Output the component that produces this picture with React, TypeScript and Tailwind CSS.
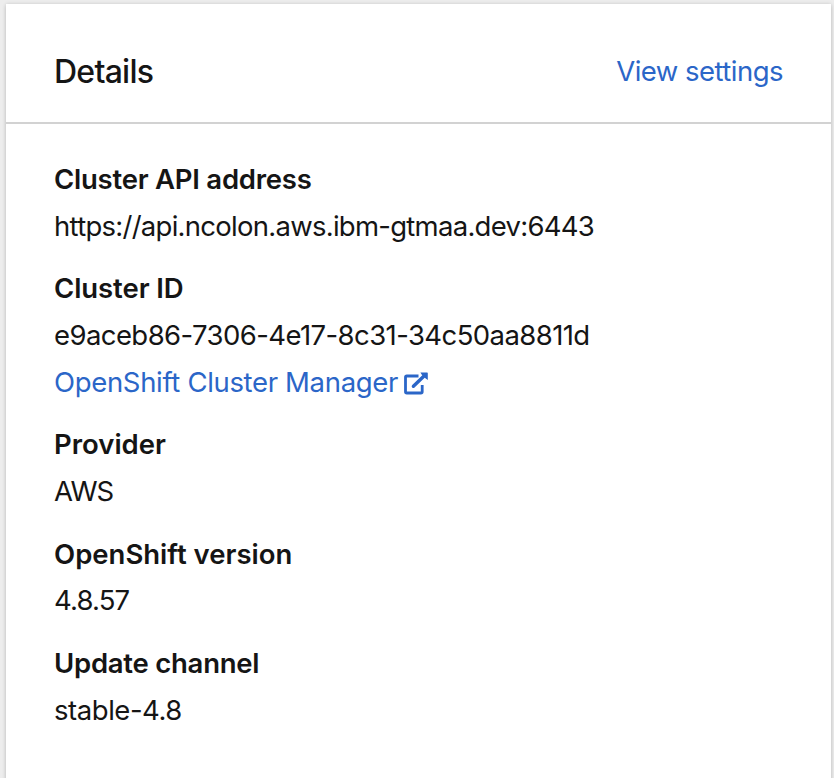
import type { ReactNode } from "react";

function ExternalLinkIcon() {
  return (
    <svg className="ml-[6px] mt-[2px] h-6 w-6 shrink-0" viewBox="0 0 24 24" fill="none" stroke="currentColor">
      <path d="M14.5 5H2.8a1.3 1.3 0 0 0-1.3 1.3v14.4a1.3 1.3 0 0 0 1.3 1.3h14.1a1.3 1.3 0 0 0 1.3-1.3v-6.7" strokeWidth="2.8" />
      <path d="M9.4 15.3 20.3 4.7" strokeWidth="3.4" strokeLinecap="round" />
      <path d="M16.4 1.5h6.7a.7.7 0 0 1 .7.7v6.8l-2.4-1.7-3.4-3.4z" fill="currentColor" stroke="none" />
    </svg>
  );
}

function Item({ label, tracking, children }: { label: string; tracking: string; children: ReactNode }) {
  return (
    <div className="flex flex-col items-start gap-[4.6px]">
      <dt className={`font-semibold ${tracking}`}>{label}</dt>
      {children}
    </div>
  );
}

export default function App() {
  return (
    <div className="h-[778px] overflow-hidden bg-[#ededed] pt-1 pr-[3px] pl-1.5 font-['Inter',sans-serif] text-[27.5px] leading-[42px] whitespace-nowrap text-[#151515]">
      <section className="h-[800px] bg-white shadow-[0_2px_4px_rgba(3,3,3,0.12),0_0_4px_rgba(3,3,3,0.12)]">
        <header className="flex h-[120px] items-center justify-between border-b-2 border-[#d2d2d2] pt-4 pr-12 pl-12">
          <h2 className="pt-px text-[32px] font-medium tracking-[-0.75px]">Details</h2>
          <a className="text-[#2b66c8] tracking-[-0.52px]">View settings</a>
        </header>
        <dl className="flex flex-col gap-[20.8px] px-12 pt-[34px]">
          <Item label="Cluster API address" tracking="tracking-[-0.24px]">
            <dd className="tracking-[-0.73px]">https://api.ncolon.aws.ibm-gtmaa.dev:6443</dd>
          </Item>
          <Item label="Cluster ID" tracking="tracking-[-0.08px]">
            <dd className="tracking-[-0.58px]">e9aceb86-7306-4e17-8c31-34c50aa8811d</dd>
            <dd className="flex items-center text-[#2b66c8] tracking-[-0.33px]">
              <a>OpenShift Cluster Manager</a>
              <ExternalLinkIcon />
            </dd>
          </Item>
          <Item label="Provider" tracking="tracking-[0px]">
            <dd className="tracking-[-1px]">AWS</dd>
          </Item>
          <Item label="OpenShift version" tracking="tracking-[0px]">
            <dd className="tracking-[-0.85px]">4.8.57</dd>
          </Item>
          <Item label="Update channel" tracking="tracking-[-0.25px]">
            <dd className="tracking-[-0.45px]">stable-4.8</dd>
          </Item>
        </dl>
      </section>
    </div>
  );
}
